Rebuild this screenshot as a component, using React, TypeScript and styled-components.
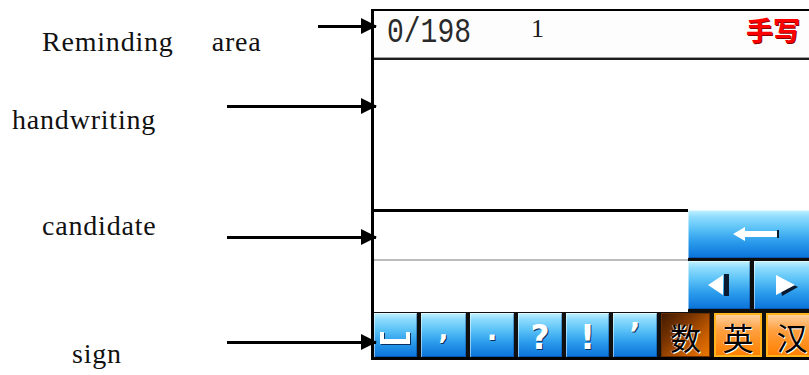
import React from 'react'
import styled, { createGlobalStyle } from 'styled-components'

const GlobalStyle = createGlobalStyle`
  html, body {
    margin: 0;
    padding: 0;
    background: #ffffff;
    overflow: hidden;
  }
  #root {
    width: 809px;
    height: 375px;
  }
`

const Page = styled.div`
  display: flex;
  width: 809px;
  height: 375px;
  overflow: hidden;
  background: #fff;
`

const Annotations = styled.div`
  position: relative;
  flex: none;
  width: 371px;
  height: 375px;
  z-index: 2;
`

const Label = styled.div<{ $top: number; $left: number }>`
  position: absolute;
  top: ${p => p.$top}px;
  left: ${p => p.$left}px;
  font-family: "Liberation Serif", "Times New Roman", serif;
  font-size: 28px;
  line-height: 28px;
  letter-spacing: 0.8px;
  color: #111;
  white-space: nowrap;
`

const Word = styled.span<{ $gap: number }>`
  margin-left: ${p => p.$gap}px;
`

const Arrow = styled.div<{ $top: number; $left: number }>`
  position: absolute;
  top: ${p => p.$top}px;
  left: ${p => p.$left}px;
  right: -5px;
  height: 3px;
  background: #000;

  &::after {
    content: '';
    position: absolute;
    right: -1px;
    top: -7px;
    border-left: 16px solid #000;
    border-top: 8.5px solid transparent;
    border-bottom: 8.5px solid transparent;
  }
`

const Device = styled.div`
  flex: none;
  margin-top: 9px;
  width: 443px;
  height: 346px;
  border-left: 3px solid #000;
  border-top: 2px solid #000;
  border-bottom: 3px solid #000;
  display: flex;
  flex-direction: column;
  background: #fff;
`

const Header = styled.div`
  flex: none;
  height: 39px;
  display: flex;
  align-items: flex-start;
  padding: 8px 17px 0 13px;
  background: #fdfdfd;
  border-bottom: 2px solid #1c1c1c;
  box-shadow: inset 0 -1px 0 #a0a0a0;
`

const Counter = styled.span`
  display: inline-block;
  font-family: "Liberation Mono", "Courier New", monospace;
  font-size: 28px;
  line-height: 28px;
  color: #2a2a2a;
  transform: scaleY(1.22);
`

const PageNum = styled.span`
  margin: -3px 0 0 60px;
  font-family: "Liberation Serif", "Times New Roman", serif;
  font-size: 26px;
  line-height: 26px;
  color: #1a1a1a;
`

const ModeTitle = styled.span`
  margin: -3px 0 0 auto;
  font-family: "Noto Sans CJK SC", "Noto Sans", sans-serif;
  font-size: 27px;
  line-height: 27px;
  font-weight: 700;
  color: #ff0000;
  text-shadow: 1px 1px 0 #8a0000;
`

const WritingPad = styled.div`
  flex: none;
  height: 149px;
  background: #fff;
`

const Lower = styled.div`
  flex: none;
  height: 103px;
  display: flex;
  background: #fff;
`

const CandidatePane = styled.div`
  flex: none;
  width: 314px;
  border-top: 3px solid #000;
  display: flex;
  flex-direction: column;
`

const CandidateRow = styled.div<{ $h: number; $divider?: boolean }>`
  height: ${p => p.$h}px;
  background: #fff;
  border-bottom: ${p => (p.$divider ? '2px solid #bdbdbd' : 'none')};
`

const ControlPane = styled.div`
  flex: 1;
  margin-top: 1px;
  display: grid;
  grid-template-columns: 62px 1fr;
  grid-template-rows: 48px 48px;
  gap: 3px 4px;
  padding-bottom: 3px;
  background: #0d0d0d;
`

const blueFace = `
  background: linear-gradient(180deg, #c4f2ff 0%, #8fdcfd 14%, #5cc3f7 38%, #2c9cec 66%, #0a72da 100%);
  box-shadow: inset 1px 1px 0 rgba(255, 255, 255, 0.5), inset -1px -1px 0 rgba(0, 40, 110, 0.35);
`

const KeyButton = styled.div<{ $wide?: boolean }>`
  display: flex;
  align-items: center;
  justify-content: center;
  grid-column: ${p => (p.$wide ? '1 / -1' : 'auto')};
  ${blueFace}
`

const SignBar = styled.div`
  flex: none;
  height: 44px;
  padding-top: 1px;
  display: flex;
  gap: 4px;
  background: #101010;
`

const SignKey = styled.div<{ $w: number; $tone: 'blue' | 'active' | 'orange' }>`
  flex: none;
  width: ${p => p.$w}px;
  box-sizing: border-box;
  display: flex;
  align-items: center;
  justify-content: center;
  overflow: hidden;
  ${p => p.$tone === 'blue' && blueFace}
  ${p =>
    p.$tone === 'active' &&
    `
    background: linear-gradient(135deg, #3e1a00 0%, #7a3400 35%, #c85e00 72%, #ee7800 100%);
    box-shadow: inset 0 0 0 1px #6a2e00;
  `}
  ${p =>
    p.$tone === 'orange' &&
    `
    border: 2px solid #ffb41e;
    background: linear-gradient(180deg, #ffcf9a 0%, #ffa040 38%, #ff8000 100%);
  `}
`

const Punct = styled.span<{ $size: number; $shift: number }>`
  font-family: "DejaVu Sans", "Liberation Sans", sans-serif;
  font-weight: 700;
  font-size: ${p => p.$size}px;
  line-height: 1;
  color: #fff;
  text-shadow: 1px 1px 0 #0a3060;
  transform: translateY(${p => p.$shift}px);
`

const Hanzi = styled.span`
  font-family: "Noto Sans CJK SC", "Noto Sans", sans-serif;
  font-size: 31px;
  line-height: 1;
  color: #000;
  text-shadow: 1px 1px 0 #fff, -1px 0 0 rgba(255, 255, 255, 0.5);
  transform: translateY(1px);
`

const SpaceIcon = () => (
  <svg width="31" height="13" viewBox="0 0 31 13" style={{ transform: 'translateY(3px)' }}>
    <path d="M1 1h4v7h22V1h4v12H1z" fill="#0a3060" />
    <path d="M0 0h4v7h22V0h4v12H0z" fill="#fff" />
  </svg>
)

const BackIcon = () => (
  <svg width="46" height="16" viewBox="0 0 46 16" style={{ marginLeft: 6 }}>
    <path d="M0 8 L12 1 V5 H44 V11 H12 V15 Z" fill="#fff" />
    <rect x="44" y="4" width="2" height="8" fill="#0a1a30" />
  </svg>
)

const LeftIcon = () => (
  <svg width="23" height="22" viewBox="0 0 23 22">
    <path d="M0 11 L15 1 V21 Z" fill="#fff" />
    <rect x="16" y="0" width="5" height="22" fill="#0a1a30" />
  </svg>
)

const RightIcon = () => (
  <svg width="22" height="22" viewBox="0 0 22 22" style={{ marginLeft: 3 }}>
    <path d="M3 4 L22 13 L6 22 Z" fill="#0a1a30" />
    <path d="M0 1 L19 11 L0 21 Z" fill="#fff" />
  </svg>
)

const signs = [
  { w: 45, text: ',', size: 26, shift: -5 },
  { w: 44, text: '.', size: 28, shift: -4 },
  { w: 44, text: '?', size: 33, shift: 2 },
  { w: 43, text: '!', size: 33, shift: 2 },
  { w: 44, text: '’', size: 30, shift: -1 },
]

const App = () => {
  return (
    <Page>
      <GlobalStyle />
      <Annotations>
        <Label $top={28} $left={42}>
          Reminding<Word $gap={38}>area</Word>
        </Label>
        <Arrow $top={25} $left={318} />
        <Label $top={106} $left={12}>handwriting</Label>
        <Arrow $top={105} $left={227} />
        <Label $top={212} $left={42}>candidate</Label>
        <Arrow $top={236} $left={227} />
        <Label $top={340} $left={72}>sign</Label>
        <Arrow $top={341} $left={227} />
      </Annotations>

      <Device>
        <Header>
          <Counter>0/198</Counter>
          <PageNum>1</PageNum>
          <ModeTitle>手写</ModeTitle>
        </Header>

        <WritingPad />

        <Lower>
          <CandidatePane>
            <CandidateRow $h={47} $divider />
            <CandidateRow $h={51} />
          </CandidatePane>
          <ControlPane>
            <KeyButton $wide>
              <BackIcon />
            </KeyButton>
            <KeyButton>
              <LeftIcon />
            </KeyButton>
            <KeyButton>
              <RightIcon />
            </KeyButton>
          </ControlPane>
        </Lower>

        <SignBar>
          <SignKey $w={43} $tone="blue">
            <SpaceIcon />
          </SignKey>
          {signs.map((s, i) => (
            <SignKey key={i} $w={s.w} $tone="blue">
              <Punct $size={s.size} $shift={s.shift}>{s.text}</Punct>
            </SignKey>
          ))}
          <SignKey $w={49} $tone="active">
            <Hanzi>数</Hanzi>
          </SignKey>
          <SignKey $w={48} $tone="orange">
            <Hanzi>英</Hanzi>
          </SignKey>
          <SignKey $w={52} $tone="orange">
            <Hanzi>汉</Hanzi>
          </SignKey>
        </SignBar>
      </Device>
    </Page>
  )
}

export default App
